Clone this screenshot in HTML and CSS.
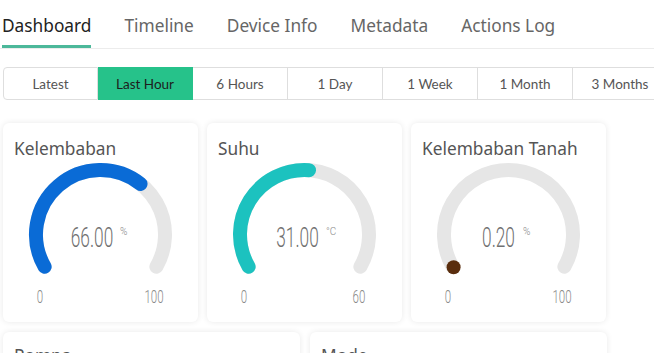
FILE: index.html
```html
<!DOCTYPE html>
<html lang="id">

<head>
    <meta charset="UTF-8">
    <meta name="viewport" content="width=device-width, initial-scale=1.0">
    <title>Dashboard</title>
    <link rel="stylesheet" href="styles.css">
</head>

<body>

    <nav class="tabs">
        <a class="tab active" href="#">Dashboard</a>
        <a class="tab" href="#">Timeline</a>
        <a class="tab" href="#">Device Info</a>
        <a class="tab" href="#">Metadata</a>
        <a class="tab" href="#">Actions Log</a>
    </nav>

    <div class="range">
        <button class="range-btn">Latest</button>
        <button class="range-btn active">Last Hour</button>
        <button class="range-btn">6 Hours</button>
        <button class="range-btn">1 Day</button>
        <button class="range-btn">1 Week</button>
        <button class="range-btn">1 Month</button>
        <button class="range-btn">3 Months</button>
    </div>

    <div class="cards">
        <!-- humidity -->
        <div class="card">
            <h3 class="card-title">Kelembaban</h3>
            <svg class="gauge" viewBox="0 0 195 161" width="195" height="161">
                <path class="track" d="M 41.64 105.75 A 64.5 64.5 0 1 1 153.36 105.75" />
                <path d="M 41.64 105.75 A 64.5 64.5 0 0 1 137.56 22.95" stroke="#0a6bd6" />
                <g transform="translate(89 86) scale(0.64 1)">
                    <text class="value" text-anchor="middle">66.00</text>
                </g>
                <text class="unit" x="117" y="74">%</text>
                <g transform="translate(37 142) scale(0.64 1)">
                    <text class="minmax" text-anchor="middle">0</text>
                </g>
                <g transform="translate(151 142) scale(0.64 1)">
                    <text class="minmax" text-anchor="middle">100</text>
                </g>
            </svg>
        </div>

        <!-- temperature -->
        <div class="card">
            <h3 class="card-title">Suhu</h3>
            <svg class="gauge" viewBox="0 0 195 161" width="195" height="161">
                <path class="track" d="M 41.64 105.75 A 64.5 64.5 0 1 1 153.36 105.75" />
                <path d="M 41.64 105.75 A 64.5 64.5 0 0 1 102.0 9.15" stroke="#1cc2bf" />
                <g transform="translate(90.5 86) scale(0.64 1)">
                    <text class="value" text-anchor="middle">31.00</text>
                </g>
                <text class="unit" x="119" y="74">°C</text>
                <g transform="translate(37 142) scale(0.64 1)">
                    <text class="minmax" text-anchor="middle">0</text>
                </g>
                <g transform="translate(152 142) scale(0.64 1)">
                    <text class="minmax" text-anchor="middle">60</text>
                </g>
            </svg>
        </div>

        <!-- soil -->
        <div class="card">
            <h3 class="card-title">Kelembaban Tanah</h3>
            <svg class="gauge" viewBox="0 0 195 161" width="195" height="161">
                <path class="track" d="M 41.64 105.75 A 64.5 64.5 0 1 1 153.36 105.75" />
                <circle cx="42.6" cy="106.3" r="7" fill="#5a2e0e" />
                <g transform="translate(87.5 86) scale(0.64 1)">
                    <text class="value" text-anchor="middle">0.20</text>
                </g>
                <text class="unit" x="112" y="74">%</text>
                <g transform="translate(37 142) scale(0.64 1)">
                    <text class="minmax" text-anchor="middle">0</text>
                </g>
                <g transform="translate(151 142) scale(0.64 1)">
                    <text class="minmax" text-anchor="middle">100</text>
                </g>
            </svg>
        </div>
    </div>

    <div class="cards-wide">
        <div class="card">
            <h3 class="card-title small">Pompa</h3>
        </div>
        <div class="card">
            <h3 class="card-title small">Mode</h3>
        </div>
    </div>

</body>

</html>
```

FILE: styles.css
```css
* {
    padding: 0;
    margin: 0;
    box-sizing: border-box;
}

body {
    background-color: #fff;
    font-family: "Noto Sans", "Open Sans", sans-serif;
    width: 654px;
    height: 353px;
    overflow: hidden;
}

.tabs {
    display: flex;
    gap: 33px;
    height: 49px;
    padding-left: 2px;
    border-bottom: 1px solid #ececec;
}

.tab {
    display: flex;
    align-items: center;
    height: 48px;
    font-size: 17.3px;
    color: #666;
    text-decoration: none;
    border-bottom: 3px solid transparent;
    padding-top: 5px;
}

.tab.active {
    color: #222;
    border-bottom-color: #4cb89a;
}

.range {
    display: flex;
    margin: 18px 0 0 3px;
    width: 700px;
}

.range-btn {
    width: 95px;
    height: 33px;
    flex-shrink: 0;
    border: 1px solid #dedede;
    border-left: none;
    background: #fff;
    font-family: Lato, sans-serif;
    font-size: 13.5px;
    color: #555;
}

.range-btn:first-child {
    border-left: 1px solid #dedede;
    border-radius: 4px 0 0 4px;
}

.range-btn.active {
    background-color: #26c28a;
    border-color: #26c28a;
    color: #1d1d1d;
}

.cards {
    display: grid;
    grid-template-columns: repeat(3, 195px);
    gap: 9px;
    margin: 23px 0 0 3px;
}

.cards-wide {
    display: grid;
    grid-template-columns: 297px 297px;
    gap: 10px;
    margin: 10px 0 0 3px;
}

.card {
    background: #fff;
    border-radius: 6px;
    box-shadow: 0 0 6px rgba(0, 0, 0, 0.09);
    height: 199px;
}

.card-title {
    font-weight: normal;
    font-size: 17.3px;
    line-height: 24px;
    color: #555;
    padding: 14px 10px 0 11px;
    height: 38px;
    white-space: nowrap;
}

.card-title.small {
    padding-top: 12px;
}

.gauge {
    display: block;
}

.gauge path {
    fill: none;
    stroke-width: 14;
    stroke-linecap: round;
}

.gauge .track {
    stroke: #e6e6e6;
}

.value {
    font-family: Roboto, sans-serif;
    font-weight: 300;
    font-size: 27px;
    fill: #707070;
}

.unit {
    font-family: Roboto, sans-serif;
    font-weight: 300;
    font-size: 10px;
    fill: #888;
}

.minmax {
    font-family: Roboto, sans-serif;
    font-weight: 300;
    font-size: 18px;
    fill: #8a8a8a;
}
```
